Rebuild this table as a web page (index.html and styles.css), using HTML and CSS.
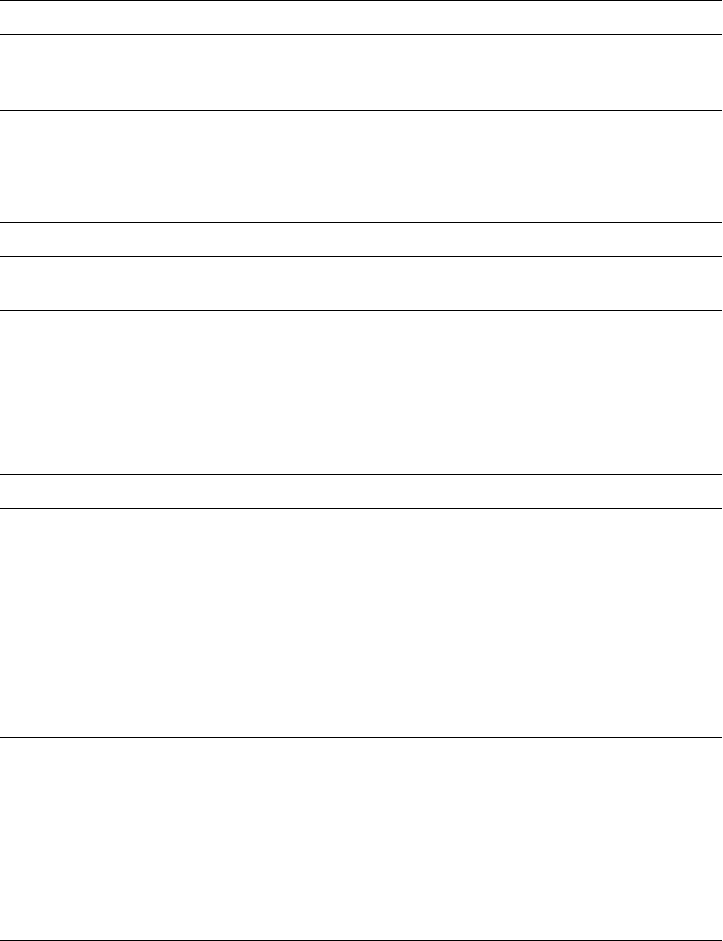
FILE: index.html
```html
<!DOCTYPE html>
<html lang="en">
<head>
    <meta charset="UTF-8">
    <meta name="viewport" content="width=device-width, initial-scale=1.0">
    <title>Sheet</title>
    <link rel="stylesheet" href="styles.css">
</head>
<body>
    <div class="sheet">
        <section class="group">
            <div class="row head"></div>
            <div class="row short"></div>
            <div class="row medium"></div>
        </section>
        <section class="group">
            <div class="row head"></div>
            <div class="row small"></div>
            <div class="row large"></div>
        </section>
        <section class="group">
            <div class="row head"></div>
            <div class="row tall"></div>
            <div class="row last"></div>
        </section>
    </div>
</body>
</html>
```

FILE: styles.css
```css
* {
    margin: 0;
    padding: 0;
    box-sizing: border-box;
}

body {
    font-family: "Liberation Sans", Arial, sans-serif;
    background: #fff;
    color: #000;
}

.sheet {
    display: flex;
    flex-direction: column;
    width: 722px;
}

.group {
    display: flex;
    flex-direction: column;
}

.row {
    border-top: 1px solid #000;
}

.head {
    height: 34px;
}

.short {
    height: 76px;
}

.medium {
    height: 112px;
}

.small {
    height: 54px;
}

.large {
    height: 164px;
}

.tall {
    height: 229px;
}

.last {
    height: 204px;
    border-bottom: 1px solid #000;
}
```
